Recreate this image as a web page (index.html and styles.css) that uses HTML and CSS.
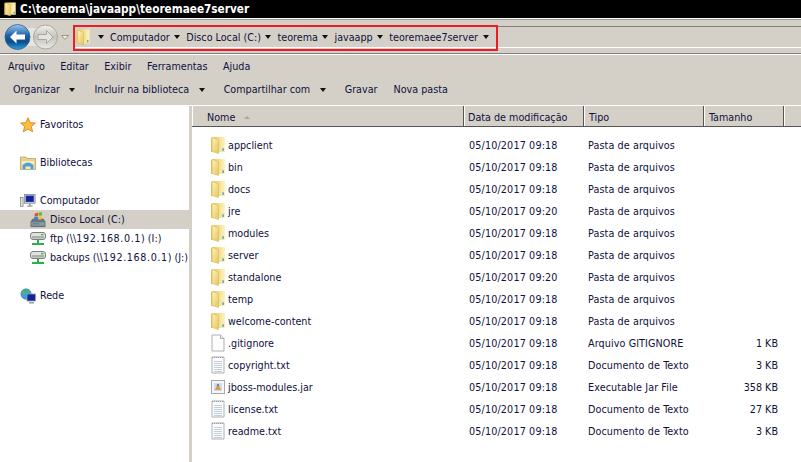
FILE: index.html
```html
<!DOCTYPE html>
<html lang="pt-BR">
<head>
    <meta charset="UTF-8">
    <title>C:\teorema\javaapp\teoremaee7server</title>
    <link rel="stylesheet" href="styles.css">
</head>
<body>
    <svg class="icon-defs" width="0" height="0">
        <defs>
            <linearGradient id="folderBack" x1="0" y1="0" x2="1" y2="0">
                <stop offset="0" stop-color="#e2c258"/>
                <stop offset="0.5" stop-color="#f3dc88"/>
                <stop offset="1" stop-color="#fff4c0"/>
            </linearGradient>
            <linearGradient id="folderFront" x1="0" y1="0" x2="1" y2="1">
                <stop offset="0" stop-color="#fff3b4"/>
                <stop offset="1" stop-color="#e3c565"/>
            </linearGradient>
            <linearGradient id="backFill" x1="0" y1="0" x2="0" y2="1">
                <stop offset="0" stop-color="#9cc8ee"/>
                <stop offset="0.45" stop-color="#1d5ea6"/>
                <stop offset="0.7" stop-color="#0e4c8e"/>
                <stop offset="1" stop-color="#2aa6e0"/>
            </linearGradient>
            <linearGradient id="forwardFill" x1="0" y1="0" x2="0" y2="1">
                <stop offset="0" stop-color="#f2f1ed"/>
                <stop offset="0.5" stop-color="#c4c2bc"/>
                <stop offset="1" stop-color="#ecebe7"/>
            </linearGradient>
            <symbol id="folder" viewBox="0 0 13 16">
                <path d="M0 1.5 L2 0.5 H13 V14.5 H0 Z" fill="url(#folderBack)"/>
                <path d="M1 1 L7 3 V16 L1 14 Z" fill="url(#folderFront)" stroke="#d4b552" stroke-width="0.5"/>
                <path d="M10.5 11 h1.5 v2.5 h-1.5 z" fill="#5fa8d4"/>
            </symbol>
            <symbol id="file" viewBox="0 0 14 18">
                <path d="M1 1 H9.5 L13 4.5 V17 H1 Z" fill="#fdfdfd" stroke="#b0b0b0"/>
                <path d="M9.5 1 V4.5 H13" fill="#eee" stroke="#b0b0b0"/>
            </symbol>
            <symbol id="text" viewBox="0 0 14 18">
                <path d="M1 1 H13 V17 H1 Z" fill="#fbfcfe" stroke="#b0b0b0"/>
                <path d="M1 1.5 h12" stroke="#999" stroke-dasharray="1 1"/>
                <path d="M3 5.5 h8 M3 7.5 h8 M3 9.5 h8 M3 11.5 h8 M3 13.5 h8 M3 15.5 h8" stroke="#c3cedb"/>
            </symbol>
            <symbol id="jar" viewBox="0 0 14 14">
                <rect x="0.5" y="0.5" width="13" height="13" fill="#f4f6f9" stroke="#a8a8a8"/>
                <rect x="3" y="3" width="8" height="8" fill="#cfdcec"/>
                <path d="M4 10 l2 -5 h2 l2 5 z" fill="#d99a55"/>
                <rect x="6" y="4" width="2" height="2" fill="#5a86b8"/>
            </symbol>
            <symbol id="drive" viewBox="0 0 18 18">
                <path d="M1 11 L3 8 H15 L17 11 V16.5 H1 Z" fill="#6c7680" stroke="#4a4f55" stroke-width="0.6"/>
                <rect x="1.5" y="11.5" width="15" height="4" fill="#8d969e"/>
                <rect x="3" y="12.5" width="7" height="1.5" fill="#5a8f9a"/>
                <rect x="12.5" y="12.5" width="2.5" height="1.5" fill="#3fd05a"/>
                <path d="M5.5 1.5 L9 0.8 V4.4 L5 5 Z" fill="#e2562a"/>
                <path d="M9.6 0.7 L13.6 0.2 L13.2 4 L9.6 4.3 Z" fill="#68b332"/>
                <path d="M4.8 5.6 L9 5 V8.8 L4.3 9.4 Z" fill="#3f7fd0"/>
                <path d="M9.6 5 L13.1 4.6 L12.8 8.4 L9.6 8.8 Z" fill="#f2c230"/>
            </symbol>
            <symbol id="netdrive" viewBox="0 0 16 14">
                <rect x="0.5" y="0.5" width="15" height="7" rx="2.5" fill="#dfe2df" stroke="#7b807b"/>
                <rect x="2" y="4" width="12" height="2.5" fill="#aab0aa"/>
                <rect x="11" y="2" width="2.5" height="1.3" fill="#48b948"/>
                <path d="M7 8 h2 v3 h5 v2 h-12 v-2 h5 z" fill="#26b34a"/>
            </symbol>
            <symbol id="star" viewBox="0 0 16 16">
                <path d="M8 0.8 L10.1 5.7 L15.4 6.1 L11.3 9.5 L12.7 14.8 L8 12 L3.3 14.8 L4.7 9.5 L0.6 6.1 L5.9 5.7 Z" fill="#fbbf3a" stroke="#d9812c" stroke-width="0.9"/>
            </symbol>
            <symbol id="library" viewBox="0 0 16 14">
                <path d="M0.5 1 H6 L7 2.5 H15.5 V13.5 H0.5 Z" fill="#ead388" stroke="#a99a65" stroke-width="0.7"/>
                <path d="M2 5 H14 V13 H2 Z" fill="#f6eabb"/>
                <path d="M2.5 13 V9 Q8 4 13.5 9 V13 H10.5 V10.5 H5.5 V13 Z" fill="#4f9fd8"/>
            </symbol>
            <symbol id="computer" viewBox="0 0 18 16">
                <rect x="0.5" y="4" width="3" height="10" fill="#d9dcdf" stroke="#6d7177" stroke-width="0.7"/>
                <rect x="5" y="0.5" width="12" height="10" fill="#c9ced4" stroke="#6d7177" stroke-width="0.7"/>
                <rect x="6.5" y="2" width="9" height="7" fill="#12249e"/>
                <path d="M10 11 h2 v2 h2 v1.5 h-6 v-1.5 h2 z" fill="#9aa0a6"/>
            </symbol>
            <symbol id="network" viewBox="0 0 16 16">
                <circle cx="6" cy="6" r="5.2" fill="#3f9fdc" stroke="#2b6d9d" stroke-width="0.5"/>
                <path d="M2 3 q3 -1 4 1 q-1 3 -3 3 z M7 1.5 q3 0 3.5 2 l-2 1 z" fill="#5ab946"/>
                <rect x="7" y="6" width="8.5" height="7" fill="#12249e" stroke="#9aa0a6" stroke-width="0.8"/>
                <rect x="9" y="14" width="5" height="1.5" fill="#9aa0a6"/>
            </symbol>
        </defs>
    </svg>

    <header class="titlebar">
        <svg class="title-icon"><use href="#folder"/></svg>
        <span class="title-text">C:\teorema\javaapp\teoremaee7server</span>
    </header>

    <div class="navbar">
        <svg class="nav-buttons" width="66" height="26" viewBox="0 0 66 26">
            <rect x="13" y="4" width="30" height="18" fill="#e6e4df"/>
            <circle cx="13.5" cy="13" r="12.5" fill="url(#backFill)" stroke="#2a5f92" stroke-width="0.8"/>
            <path d="M6 13 L12.5 6.5 V10.5 H21 V15.5 H12.5 V19.5 Z" fill="#fff"/>
            <circle cx="41.5" cy="13" r="12" fill="url(#forwardFill)" stroke="#a9a7a1"/>
            <path d="M49 13 L42.5 6.5 V10.5 H34 V15.5 H42.5 V19.5 Z" fill="#e4e3df" stroke="#9d9b95" stroke-width="0.8"/>
            <path d="M57.5 11.5 h7 l-3.5 4 z" fill="#f0efec" stroke="#85837d" stroke-width="0.8"/>
        </svg>
        <nav class="crumbs">
            <svg class="crumb-icon"><use href="#folder"/></svg>
            <i class="arrow crumb-first"></i>
            <span class="crumb">Computador</span><i class="arrow"></i>
            <span class="crumb">Disco Local (C:)</span><i class="arrow"></i>
            <span class="crumb">teorema</span><i class="arrow"></i>
            <span class="crumb">javaapp</span><i class="arrow"></i>
            <span class="crumb">teoremaee7server</span><i class="arrow"></i>
        </nav>
    </div>

    <div class="menubar">
        <span>Arquivo</span>
        <span>Editar</span>
        <span>Exibir</span>
        <span>Ferramentas</span>
        <span>Ajuda</span>
    </div>

    <div class="toolbar">
        <span class="tool">Organizar<i class="arrow"></i></span>
        <span class="tool">Incluir na biblioteca<i class="arrow"></i></span>
        <span class="tool">Compartilhar com<i class="arrow"></i></span>
        <span class="tool">Gravar</span>
        <span class="tool">Nova pasta</span>
    </div>

    <main class="panes">
        <aside class="sidebar">
            <div class="side-item"><svg class="side-icon"><use href="#star"/></svg>Favoritos</div>
            <div class="side-item group"><svg class="side-icon"><use href="#library"/></svg>Bibliotecas</div>
            <div class="side-item group"><svg class="side-icon"><use href="#computer"/></svg>Computador</div>
            <div class="side-item sub selected"><svg class="side-icon"><use href="#drive"/></svg>Disco Local (C:)</div>
            <div class="side-item sub"><svg class="side-icon"><use href="#netdrive"/></svg><span>ftp (\\<span class="ip">192.168.0.1</span>) (I:)</span></div>
            <div class="side-item sub"><svg class="side-icon"><use href="#netdrive"/></svg><span>backups (\\<span class="ip">192.168.0.1</span>) (J:)</span></div>
            <div class="side-item group"><svg class="side-icon"><use href="#network"/></svg>Rede</div>
        </aside>

        <section class="files">
            <div class="columns">
                <div class="col col-name">Nome<i class="sort"></i></div>
                <div class="col col-date">Data de modificação</div>
                <div class="col col-type">Tipo</div>
                <div class="col col-size">Tamanho</div>
                <div class="col col-rest"></div>
            </div>
            <div class="rows" id="rows"></div>
        </section>
    </main>

    <div class="highlight"></div>

    <script>
        const files = [
            ['folder', 'appclient', '05/10/2017 09:18', 'Pasta de arquivos', ''],
            ['folder', 'bin', '05/10/2017 09:18', 'Pasta de arquivos', ''],
            ['folder', 'docs', '05/10/2017 09:18', 'Pasta de arquivos', ''],
            ['folder', 'jre', '05/10/2017 09:20', 'Pasta de arquivos', ''],
            ['folder', 'modules', '05/10/2017 09:18', 'Pasta de arquivos', ''],
            ['folder', 'server', '05/10/2017 09:18', 'Pasta de arquivos', ''],
            ['folder', 'standalone', '05/10/2017 09:20', 'Pasta de arquivos', ''],
            ['folder', 'temp', '05/10/2017 09:18', 'Pasta de arquivos', ''],
            ['folder', 'welcome-content', '05/10/2017 09:18', 'Pasta de arquivos', ''],
            ['file', '.gitignore', '05/10/2017 09:18', 'Arquivo GITIGNORE', '1 KB'],
            ['text', 'copyright.txt', '05/10/2017 09:18', 'Documento de Texto', '3 KB'],
            ['jar', 'jboss-modules.jar', '05/10/2017 09:18', 'Executable Jar File', '358 KB'],
            ['text', 'license.txt', '05/10/2017 09:18', 'Documento de Texto', '27 KB'],
            ['text', 'readme.txt', '05/10/2017 09:18', 'Documento de Texto', '3 KB']
        ];

        document.getElementById('rows').innerHTML = files.map(([icon, name, date, type, size]) => `
            <div class="row">
                <div class="cell cell-name"><svg class="file-icon ${icon}"><use href="#${icon}"/></svg>${name}</div>
                <div class="cell cell-date">${date}</div>
                <div class="cell cell-type">${type}</div>
                <div class="cell cell-size">${size}</div>
            </div>`).join('');
    </script>
</body>
</html>
```

FILE: styles.css
```css
* {
    box-sizing: border-box;
}

html, body {
    margin: 0;
    height: 462px;
    overflow: hidden;
}

body {
    position: relative;
    background: #d4d0c8;
    color: #10103c;
    font-family: "DejaVu Sans Condensed", "DejaVu Sans", sans-serif;
    font-size: 10.7px;
}

.icon-defs {
    position: absolute;
}

.titlebar {
    display: flex;
    align-items: center;
    height: 18px;
    padding-left: 4px;
    background: #000;
    color: #fff;
    font-weight: bold;
    font-size: 11.7px;
}

.title-icon {
    width: 12px;
    height: 14px;
    margin-right: 4px;
}

.navbar {
    display: flex;
    align-items: center;
    height: 36px;
    padding: 2px 0 0 4px;
    border-top: 1px solid #fff;
    border-bottom: 1px solid #808080;
    box-shadow: inset 0 1px 0 #9a9892;
}

.nav-buttons {
    flex: none;
}

.crumbs {
    flex: 1;
    display: flex;
    align-items: center;
    height: 22px;
    margin-left: 3px;
    padding-left: 3px;
    border-top: 1px solid #808080;
    border-bottom: 1px solid #fff;
}

.crumb-icon {
    width: 14px;
    height: 16px;
    margin-right: 8px;
}

.arrow {
    display: inline-block;
    width: 0;
    height: 0;
    border-left: 3.5px solid transparent;
    border-right: 3.5px solid transparent;
    border-top: 4px solid #111;
}

.crumb-first {
    margin-right: 6px;
}

.crumb {
    margin-right: 4.5px;
}

.crumbs .arrow {
    margin-right: 6px;
}

.menubar {
    display: flex;
    gap: 15.5px;
    align-items: center;
    height: 23px;
    padding-left: 8px;
    border-top: 1px solid #fff;
}

.toolbar {
    display: flex;
    align-items: center;
    gap: 16px;
    height: 28px;
    padding: 0 0 4px 13px;
}

.tool .arrow {
    margin: 0 3px 1px 9.5px;
}

.panes {
    display: flex;
    height: 357px;
}

.sidebar {
    width: 192px;
    padding-top: 9px;
    background: linear-gradient(#fff, #fff) no-repeat 0 0 / 189px 100%;
    border-top: 1px solid #fff;
}

.side-item {
    display: flex;
    align-items: center;
    width: 189px;
    height: 19px;
    padding-left: 20px;
    white-space: nowrap;
}

.side-item.group {
    margin-top: 19px;
}

.side-item.sub {
    padding-left: 30px;
}

.side-item.selected {
    background: #d4d0c8;
}

.side-icon {
    width: 16px;
    height: 16px;
    margin-right: 4px;
}

.ip {
    letter-spacing: 0.6px;
}

.files {
    flex: 1;
    background: #fff;
}

.columns {
    display: grid;
    grid-template-columns: 272px 120px 120px 80px 1fr;
    height: 22px;
    background: #d4d0c8;
    border-top: 1px solid #fff;
    border-bottom: 1px solid #555;
}

.col {
    display: flex;
    align-items: center;
    padding: 2px 0 0 4px;
    border-left: 1px solid #fff;
    border-right: 1px solid #555;
}

.col-date {
    padding-left: 3px;
}

.col-name {
    padding-left: 14px;
}

.col-rest {
    border-right: 0;
}

.sort {
    width: 0;
    height: 0;
    margin-left: 9px;
    border-left: 3px solid transparent;
    border-right: 3px solid transparent;
    border-bottom: 3px solid #a9a69e;
}

.rows {
    padding-top: 7px;
}

.row {
    display: grid;
    grid-template-columns: 272px 120px 120px 74px;
    height: 22px;
    align-items: center;
}

.cell {
    padding-left: 5px;
    white-space: nowrap;
}

.cell-date {
    letter-spacing: 0.15px;
}

.cell-type {
    padding-left: 4px;
    letter-spacing: 0.1px;
}

.cell-name {
    display: flex;
    align-items: center;
    padding-left: 19px;
}

.cell-size {
    padding: 0;
    text-align: right;
}

.file-icon {
    width: 14px;
    height: 18px;
    margin-right: 3px;
}

.file-icon.jar {
    height: 14px;
}

.highlight {
    position: absolute;
    left: 73px;
    top: 25px;
    width: 425px;
    height: 26px;
    border: 2px solid #ed1c24;
}
```
